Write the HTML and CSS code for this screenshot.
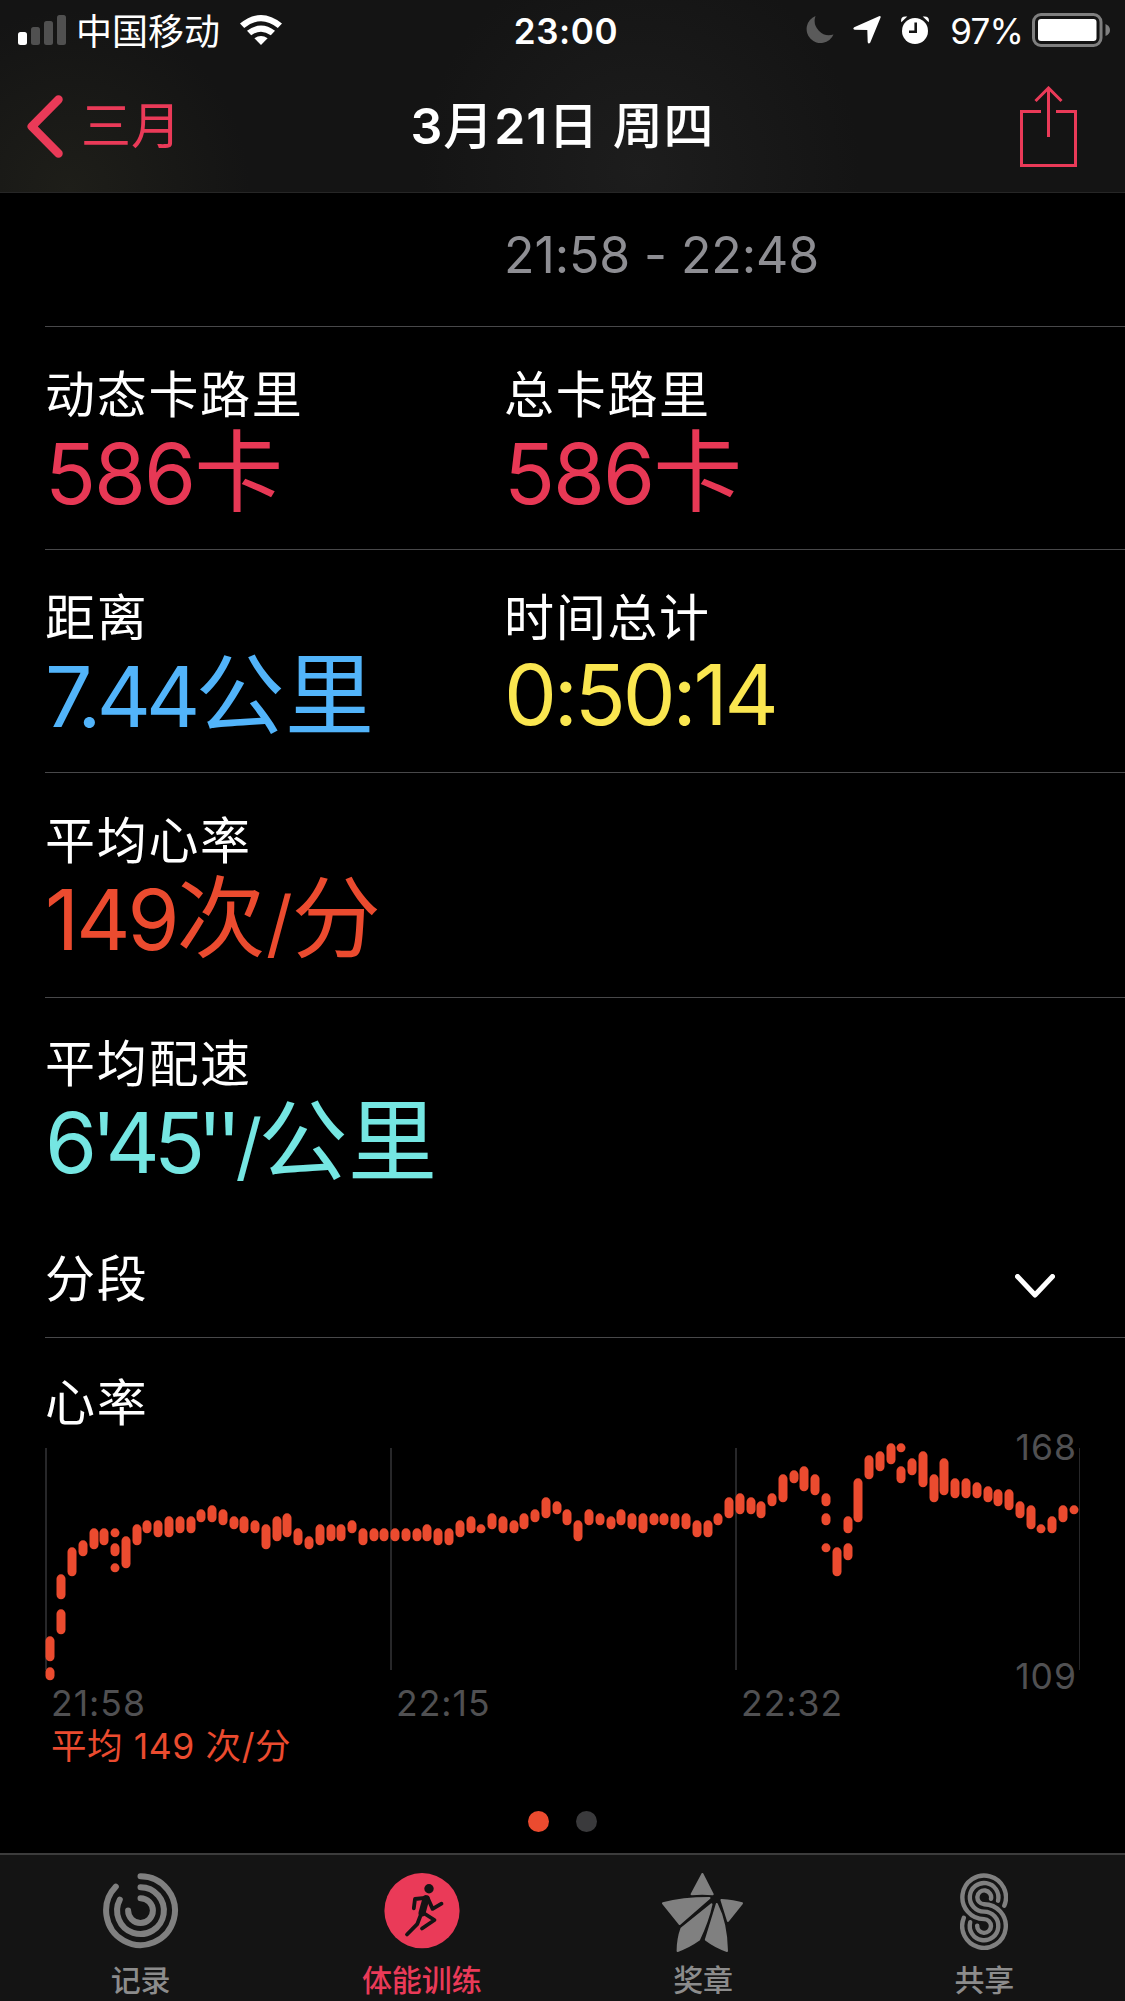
FILE: index.html
```html
<!DOCTYPE html>
<html lang="zh-CN">
<head>
  <meta charset="UTF-8" />
  <meta name="viewport" content="width=device-width, initial-scale=1.0" />
  <title>体能训练</title>
  <link rel="stylesheet" href="styles.css">
</head>
<body>
  <div class="screen">
    <header class="header">
      <div class="status">
        <div class="status-left">
          <svg class="signal" viewBox="0 0 48 30">
            <rect x="0" y="17" width="9" height="13" rx="2.5" fill="#fff"/>
            <rect x="13" y="12" width="9" height="18" rx="2.5"/>
            <rect x="26" y="6" width="9" height="24" rx="2.5"/>
            <rect x="39" y="0" width="9" height="30" rx="2.5"/>
          </svg>
          <span class="carrier">中国移动</span>
          <svg class="wifi" viewBox="0 0 42 30">
            <path d="M0 8.6Q21-8.6 42 8.6L37.8 13Q21-.6 4.2 13z"/>
            <path d="M7 15.8Q21 5.4 35 15.8L30.8 20.3Q21 13 11.2 20.3z"/>
            <path d="M14.4 23.2Q21 18.6 27.6 23.2L21 30z"/>
          </svg>
        </div>
        <div class="time">23:00</div>
        <div class="status-right">
          <svg class="moon" viewBox="0 0 28 28"><path d="M9.5 0A14 14 0 1 0 27.5 18.5A14.5 14.5 0 0 1 9.5 0z"/></svg>
          <svg class="location" viewBox="0 0 28 28"><path d="M26 .3Q28-.4 27.6 1.6L17.3 26.5Q15.6 28.6 14.7 26.2L14.3 14.1L1.7 13.8Q-.8 12.8 1.2 11.2z"/></svg>
          <svg class="alarm" viewBox="0 0 28 28">
            <circle cx="14" cy="15" r="13"/>
            <path d="M.3 6.2Q-1.1-.6 6.3.6zM27.7 6.2Q29.1-.6 21.7.6z"/>
            <path d="M14.7 6.5V15.8H8" class="hands"/>
          </svg>
          <span class="percent">97%</span>
          <svg class="battery" viewBox="0 0 78 34">
            <rect x="1.5" y="1.5" width="67.5" height="31" rx="7.5" class="shell"/>
            <rect x="6" y="6" width="58.5" height="22" rx="3" fill="#fff"/>
            <path d="M73.5 11Q78 13 78 17T73.5 23z" fill="#7f7f7f"/>
          </svg>
        </div>
      </div>
      <nav class="nav">
        <a class="back">
          <svg viewBox="0 0 36 63"><path d="M31.5 4.5L4.8 31.5L31.5 58.5"/></svg>
          三月
        </a>
        <h1>3<span>月</span>21<span>日</span> <span>周四</span></h1>
        <svg class="share" viewBox="0 0 57 81"><path d="M21 25.5H1.5V79.5H55.5V25.5H36M28.5 51V2M15.5 15L28.5 2L41.5 15"/></svg>
      </nav>
    </header>

    <main class="content">
      <div class="row row-time">
        <div class="period">21:58 - 22:48</div>
      </div>
      <div class="row">
        <div class="stat">
          <div class="label">动态卡路里</div>
          <div class="value red">586<span>卡</span></div>
        </div>
        <div class="stat">
          <div class="label">总卡路里</div>
          <div class="value red">586<span>卡</span></div>
        </div>
      </div>
      <div class="row">
        <div class="stat">
          <div class="label">距离</div>
          <div class="value blue">7.44<span>公里</span></div>
        </div>
        <div class="stat">
          <div class="label">时间总计</div>
          <div class="value yellow">0:50:14</div>
        </div>
      </div>
      <div class="row row-rate">
        <div class="stat">
          <div class="label">平均心率</div>
          <div class="value orange">149<span>次</span><em>/</em><span>分</span></div>
        </div>
      </div>
      <div class="row row-pace">
        <div class="stat">
          <div class="label">平均配速</div>
          <div class="value teal">6'45<b>''</b><em>/</em><span>公里</span></div>
        </div>
      </div>
      <div class="row row-splits">
        <div class="label">分段</div>
        <svg class="arrow-down" viewBox="0 0 40 25"><path d="M2.5 2.5L20 21L37.5 2.5"/></svg>
      </div>
      <section class="heart">
        <div class="label">心率</div>
        <svg class="chart" viewBox="0 0 1125 350">
          <path class="grid" d="M46 28V250M391 28V250M736 28V250"/>
          <path class="grid thin" d="M1079.5 28V250"/>
          <g id="bars"></g>
          <text x="1077" y="40" text-anchor="end">168</text>
          <text x="1077" y="269" text-anchor="end">109</text>
          <text x="51" y="296">21:58</text>
          <text x="396" y="296">22:15</text>
          <text x="741" y="296">22:32</text>
          <text x="51" y="339" class="average">平均 149 次/分</text>
        </svg>
      </section>
      <div class="pager"><i class="active"></i><i></i></div>
    </main>

    <footer class="tabs">
      <a class="tab">
        <svg width="76" height="80" viewBox="0 0 76 80">
          <g class="rings">
            <path d="M37.5 3.2A34.4 34.4 0 1 1 12.8 13.7"/>
            <path d="M37.5 14.2A23.4 23.4 0 1 1 16.8 26.7"/>
            <path d="M37.5 25.2A12.4 12.4 0 1 1 25.1 37.6"/>
          </g>
        </svg>
        记录
      </a>
      <a class="tab active">
        <svg width="76" height="80" viewBox="0 0 76 80">
          <circle cx="38" cy="37.7" r="37.6"/>
          <circle cx="45" cy="15.7" r="4.7" fill="#141414"/>
          <g class="runner">
            <path d="M43.5 24.6L31 26L29.8 35.3M43.5 24.6L48.6 35.9L57.5 30.7M39.5 40L50.5 47L38 55.5M37.5 40L33.2 51.2L23 61.5"/>
            <path class="torso" d="M42 25.5L38 40"/>
          </g>
        </svg>
        体能训练
      </a>
      <a class="tab">
        <svg width="82" height="80" viewBox="0 0 82 80">
          <g class="star">
            <path d="M40.4 1L29.6 21.2Q40 20.4 50.7 21.2z"/>
            <path d="M1 30.3Q20 25 47.5 25L17.7 51z"/>
            <path d="M59.4 27Q72 27.8 80 30.3L66 48z"/>
            <path d="M49.5 31.3L19.4 55.5Q15.6 66 15.6 78Q27 74 37 66.8Q46 48 49.5 31.3z"/>
            <path d="M54.8 31L43.8 66.8Q54 74.5 65 78Q64.5 50 54.8 31z"/>
          </g>
        </svg>
        奖章
      </a>
      <a class="tab">
        <svg width="48" height="80" viewBox="0 0 48 80">
          <g class="sharing">
            <path d="M44.3 32.7A21.8 21.8 0 1 0 24.1 46.1A6.9 6.9 0 1 1 17.2 52.6"/>
            <path d="M38 27.7A14.3 14.3 0 1 0 24.1 38.6A14.3 14.3 0 1 1 10.2 49.2"/>
            <path d="M31 25.8A6.9 6.9 0 1 0 24.1 31.2A21.8 21.8 0 1 1 3.8 44.8"/>
          </g>
        </svg>
        共享
      </a>
    </footer>
  </div>
  <script src="chart.js"></script>
</body>
</html>
```

FILE: styles.css
```css
*, *::before, *::after {
  box-sizing: border-box;
  margin: 0;
  padding: 0;
}

body {
  font-family: Inter, "Noto Sans CJK SC", sans-serif;
  background-color: #000;
  color: #fff;
}

.screen {
  width: 1125px;
  height: 2001px;
  display: flex;
  flex-direction: column;
  overflow: hidden;
}

svg {
  display: block;
  flex-shrink: 0;
}

/* header */
.header {
  height: 193px;
  background: radial-gradient(circle at 70px 190px, #1e1e19, transparent 180px),
    radial-gradient(circle at 640px 170px, #1d1d1d, transparent 220px),
    #141414;
  border-bottom: 1px solid #262626;
}

.status {
  height: 60px;
  padding: 0 15px 0 18px;
  display: grid;
  grid-template-columns: 1fr auto 1fr;
  align-items: center;
}

.status-left, .status-right {
  display: flex;
  align-items: center;
}

.status-right {
  justify-content: flex-end;
}

.signal {
  width: 48px;
  height: 30px;
  fill: #505050;
}

.carrier {
  margin-left: 10px;
  padding-top: 4px;
  font-size: 36px;
  line-height: 56px;
}

.wifi {
  width: 42px;
  height: 30px;
  margin-left: 20px;
  fill: #fff;
}

.time {
  padding: 2px 0 0 4px;
  font-size: 35px;
  font-weight: 600;
  letter-spacing: 0.6px;
}

.moon, .location, .alarm {
  width: 28px;
  height: 28px;
  fill: #fff;
}

.moon {
  fill: #5a5a5a;
}

.location {
  margin-left: 19px;
}

.alarm {
  margin-left: 20px;
}

.hands {
  fill: none;
  stroke: #141414;
  stroke-width: 2.6;
}

.percent {
  margin: 0 9px 0 21px;
  padding-top: 2px;
  font-size: 35px;
  letter-spacing: -0.8px;
}

.battery {
  width: 78px;
  height: 34px;
}

.shell {
  fill: none;
  stroke: #7f7f7f;
  stroke-width: 3;
}

.nav {
  height: 132px;
  padding: 0 27px;
  display: grid;
  grid-template-columns: 1fr auto 1fr;
  align-items: center;
}

.back {
  display: flex;
  align-items: center;
  gap: 18px;
  font-size: 50px;
  line-height: 60px;
  color: #ea3a58;
}

.back svg {
  width: 36px;
  height: 63px;
  fill: none;
  stroke: #ea3a58;
  stroke-width: 8.5;
  stroke-linecap: round;
  stroke-linejoin: round;
}

.nav h1 {
  font-size: 50px;
  font-weight: 600;
  line-height: 60px;
  letter-spacing: 0.9px;
}

.nav h1 span {
  font-weight: 500;
}

.share {
  width: 57px;
  height: 81px;
  margin-right: 21px;
  justify-self: end;
  fill: none;
  stroke: #ea3a58;
  stroke-width: 3;
}

/* workout details */
.content {
  height: 1660px;
}

.row {
  height: 223px;
  margin-left: 45px;
  padding-top: 38px;
  border-bottom: 1px solid #48484a;
  display: grid;
  grid-template-columns: 459px 1fr;
}

.row-time {
  height: 134px;
  padding-top: 37px;
}

.period {
  grid-column: 2;
  font-size: 50px;
  line-height: 50px;
  letter-spacing: -0.1px;
  color: #8e8e93;
}

.label {
  font-size: 50px;
  line-height: 60px;
  letter-spacing: 1.7px;
}

.value {
  height: 98px;
  margin-top: -2px;
  font-size: 84px;
  line-height: 98px;
  letter-spacing: -3px;
  white-space: nowrap;
}

.value span {
  font-size: 89px;
  letter-spacing: 0.5px;
}

.value em {
  margin-right: 2px;
  font-size: 74px;
  font-style: normal;
}

.value b {
  margin-left: -2px;
  font-weight: 400;
  letter-spacing: -6px;
}

.red {
  letter-spacing: -2px;
  color: #e73855;
}

.blue {
  letter-spacing: -4.8px;
  color: #52b4fa;
}

.yellow {
  letter-spacing: -3.2px;
  color: #fae650;
}

.orange {
  color: #eb4b2f;
}

.teal {
  letter-spacing: -5.8px;
  color: #75e6e2;
}

.row-rate {
  height: 225px;
}

.row-pace {
  height: 228px;
  padding-top: 36px;
  border-bottom: none;
}

.row-splits {
  height: 112px;
  padding: 23px 70px 0 0;
  display: flex;
  justify-content: space-between;
}

.arrow-down {
  width: 40px;
  height: 25px;
  margin-top: 25px;
  fill: none;
  stroke: #fff;
  stroke-width: 5;
  stroke-linecap: round;
  stroke-linejoin: round;
}

.heart {
  padding-top: 35px;
}

.heart .label {
  height: 47px;
  margin-left: 45px;
}

.chart {
  width: 1125px;
  height: 350px;
}

.chart text {
  font-size: 35.5px;
  letter-spacing: 1px;
  fill: #505052;
}

.chart .average {
  letter-spacing: 0.6px;
  fill: #eb4b2f;
}

.grid {
  stroke: #272729;
  stroke-width: 2;
}

.thin {
  stroke-width: 1;
}

#bars {
  fill: #eb4b2f;
}

.pager {
  padding-top: 41px;
  display: flex;
  justify-content: center;
  gap: 27px;
}

.pager i {
  width: 21px;
  height: 21px;
  border-radius: 50%;
  background-color: #3a3a3c;
}

.pager .active {
  background-color: #eb4b2f;
}

/* tab bar */
.tabs {
  height: 148px;
  padding-top: 18px;
  background-color: #141414;
  border-top: 2px solid #3c3c3c;
  display: grid;
  grid-template-columns: repeat(4, 1fr);
}

.tab {
  display: flex;
  flex-direction: column;
  align-items: center;
  font-size: 30px;
  font-weight: 500;
  line-height: 54px;
  color: #8c8c8c;
  fill: #808080;
}

.tab.active {
  color: #ea3a58;
  fill: #ea3a58;
}

.rings, .sharing {
  fill: none;
  stroke: #808080;
  stroke-width: 6;
  stroke-linecap: round;
}

.sharing {
  stroke-width: 4.4;
}

.runner {
  fill: none;
  stroke: #141414;
  stroke-width: 3.8;
  stroke-linecap: round;
  stroke-linejoin: round;
}

.torso {
  stroke-width: 7;
}

.star {
  stroke: #808080;
  stroke-width: 2;
  stroke-linejoin: round;
}
```

FILE: chart.js
```js
// top/bottom pairs for every half minute, in device pixels (3x)
const beats = [
  [649, 724, 742, 781], [463, 538, 568, 643], [382, 469], [361, 409], [325, 388], [325, 376],
  [325, 352, 370, 409, 430, 457], [349, 445], [313, 376], [301, 340], [301, 352], [289, 352],
  [289, 340], [289, 340], [268, 307], [256, 307], [268, 316], [289, 328], [289, 340], [301, 340],
  [313, 388], [289, 364], [280, 352], [325, 376], [349, 388], [313, 376], [313, 364], [313, 364],
  [301, 340], [325, 376], [325, 364], [325, 364], [325, 364], [325, 364], [325, 364], [313, 364],
  [325, 376], [325, 376], [301, 352], [289, 340], [313, 340], [280, 328], [289, 340], [301, 340],
  [280, 328], [268, 307], [232, 295], [244, 283], [268, 316], [301, 364], [268, 316], [280, 316],
  [289, 328], [268, 316], [280, 328], [280, 340], [280, 316], [280, 316], [280, 328], [280, 328],
  [301, 352], [301, 352], [280, 316], [232, 295], [220, 283], [232, 283], [244, 295], [220, 259],
  [163, 247], [151, 190], [139, 214], [163, 226], [220, 259, 280, 316, 370, 397], [382, 469],
  [289, 340, 370, 421], [175, 307], [106, 178], [94, 154], [70, 133], [70, 97, 139, 190],
  [115, 166], [94, 202], [163, 247], [115, 226], [175, 235], [175, 235], [187, 235], [199, 247],
  [208, 259], [208, 271], [244, 295], [256, 328], [313, 340], [289, 340], [256, 307], [256, 283]
];

const bars = document.getElementById("bars");
const step = 1034 / beats.length;

beats.forEach((spans, i) => {
  for (let k = 0; k < spans.length; k += 2) {
    const rect = document.createElementNS("http://www.w3.org/2000/svg", "rect");
    rect.setAttribute("x", 45.5 + Math.ceil(step * i));
    rect.setAttribute("y", spans[k] / 3);
    rect.setAttribute("width", 9);
    rect.setAttribute("height", (spans[k + 1] - spans[k]) / 3);
    rect.setAttribute("rx", 4.5);
    bars.appendChild(rect);
  }
});
```
